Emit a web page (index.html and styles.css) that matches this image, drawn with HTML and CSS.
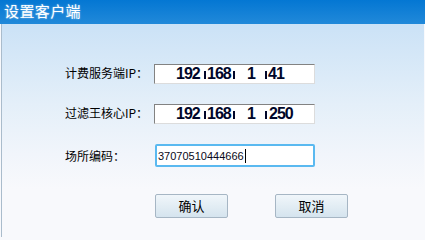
FILE: index.html
```html
<!DOCTYPE html>
<html lang="zh-CN">
<head>
<meta charset="utf-8">
<title>设置客户端</title>
<link rel="stylesheet" href="styles.css">
</head>
<body>
<div class="dialog">
  <div class="titlebar">设置客户端</div>
  <div class="content">
    <div class="form">
      <div class="label">计费服务端IP：</div>
      <div class="ipbox">
        <span class="oct o1">192</span><span class="sep"></span>
        <span class="oct o2">168</span><span class="sep"></span>
        <span class="oct o3">1</span><span class="sep"></span>
        <span class="oct o4">41</span>
      </div>
      <div class="label">过滤王核心IP：</div>
      <div class="ipbox">
        <span class="oct o1">192</span><span class="sep"></span>
        <span class="oct o2">168</span><span class="sep"></span>
        <span class="oct o3">1</span><span class="sep"></span>
        <span class="oct o4 wide">250</span>
      </div>
      <div class="label">场所编码：</div>
      <div class="textbox"><span class="value">37070510444666</span><span class="caret"></span></div>
    </div>
    <div class="buttons">
      <button class="btn">确认</button>
      <button class="btn">取消</button>
    </div>
  </div>
</div>
</body>
</html>
```
FILE: styles.css
```css
html, body {
  margin: 0;
  padding: 0;
  background: #f8f9fc;
}
body {
  width: 425px;
  height: 237px;
  overflow: hidden;
  font-family: "Noto Sans CJK SC", "DejaVu Sans", sans-serif;
}
.dialog {
  width: 425px;
  height: 237px;
  display: flex;
  flex-direction: column;
}
.titlebar {
  height: 24px;
  flex: none;
  background: linear-gradient(#0477d3, #2189d9);
  color: #fff;
  font-size: 15px;
  line-height: 22px;
  padding-left: 4px;
  letter-spacing: 0.4px;
  text-shadow: 0 0 2px rgba(255,255,255,0.6);
}
.content {
  flex: 1;
  margin-left: 1px;
  margin-right: 1px;
  border-left: 1px solid #aabccc;
  background: linear-gradient(#cbe2f6 0px, #e4eff9 80px, #f1f5fb 130px, #f8f9fc 165px);
  padding-top: 40px;
}
.form {
  display: grid;
  grid-template-columns: 88px 161px;
  grid-template-rows: 20px 20px 23px;
  row-gap: 20px;
  padding-left: 64px;
  align-items: center;
}
.label {
  font-size: 12px;
  color: #000;
  line-height: 16px;
  margin-top: -3px;
  margin-left: -1px;
}
.ipbox {
  box-sizing: border-box;
  height: 20px;
  background: #fff;
  border-top: 1px solid #828282;
  border-left: 1px solid #828282;
  border-bottom: 1px solid #dcdcdc;
  border-right: 1px solid #dcdcdc;
  display: flex;
  align-items: baseline;
  padding-left: 21px;
  font-family: "Liberation Sans", Arial, sans-serif;
  font-weight: bold;
  font-size: 16px;
  line-height: 18px;
  letter-spacing: -1px;
  color: #00062a;
  white-space: nowrap;
}
.oct { display: block; }
.o1 { width: 28px; }
.o2 { width: 26px; }
.o3 { width: 29px; text-align: center; padding-left: 1px; box-sizing: border-box; }
.o4.wide { margin-left: 1px; }
.sep {
  display: block;
  width: 2px;
  height: 8px;
  background: #00062a;
  margin-right: 1px;
}
.form .label:nth-child(5) {
  margin-top: 0;
}
.textbox {
  box-sizing: border-box;
  height: 23px;
  margin-left: 1px;
  background: #fff;
  border: 2px solid #5ab9f0;
  border-radius: 2px;
  display: flex;
  align-items: center;
  padding-left: 1px;
  font-family: "Liberation Sans", Arial, sans-serif;
  font-size: 11px;
  color: #0a0a20;
}
.caret {
  display: block;
  width: 1px;
  height: 14px;
  background: #000;
  margin-left: 1px;
}
.buttons {
  display: flex;
  gap: 47px;
  padding-left: 153px;
  margin-top: 27px;
}
.btn {
  width: 73px;
  height: 24px;
  box-sizing: border-box;
  border: 1px solid #a6b6c4;
  border-radius: 2px;
  background: linear-gradient(#f0f6fa, #d5e4ee);
  font-family: "Noto Sans CJK SC", sans-serif;
  font-size: 13px;
  color: #000;
  padding: 0;
  line-height: 20px;
}
```
